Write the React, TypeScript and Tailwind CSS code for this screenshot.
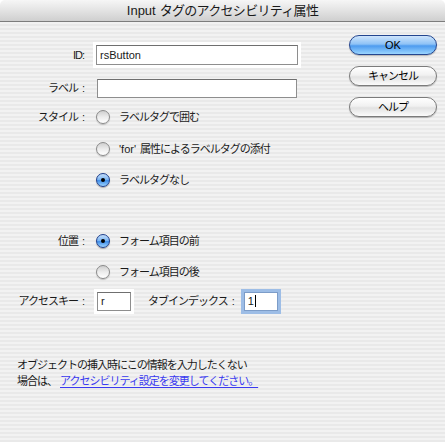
import React from 'react';

const pill =
  'w-[88px] h-[20px] rounded-full flex items-center justify-center text-[11px] text-black tracking-[-1px] shadow-[0_1px_1px_rgba(0,0,0,0.25)]';

const Radio: React.FC<{ checked?: boolean; children: React.ReactNode }> = ({ checked, children }) => (
  <div className="flex items-center h-[20px]">
    {checked ? (
      <span className="w-[14px] h-[14px] rounded-full border border-[#1f3f8c] bg-[linear-gradient(180deg,#c4defa_0%,#7fb7f3_45%,#3f8de8_55%,#9bd3ff_100%)] flex items-center justify-center shadow-[0_1px_1px_rgba(0,0,0,0.3)]">
        <span className="w-[4px] h-[4px] rounded-full bg-black" />
      </span>
    ) : (
      <span className="w-[14px] h-[14px] rounded-full border border-[#8a8a8a] bg-[linear-gradient(180deg,#cfcfcf_0%,#ececec_50%,#ffffff_100%)] shadow-[0_1px_1px_rgba(0,0,0,0.2)]" />
    )}
    <span className="ml-[9px] tracking-[-1px]">{children}</span>
  </div>
);

// right-aligned field label, colon set apart like the Japanese dialog does
const Label: React.FC<{ text: string; tight?: boolean }> = ({ text, tight }) => (
  <div className="w-[86px] shrink-0 text-right pr-[1px]">
    <span className="tracking-[-1px]">{text}</span>
    <span className={tight ? '' : 'ml-[4px]'}>:</span>
  </div>
);

export default function App() {
  return (
    <div
      className="w-[445px] h-[442px] overflow-hidden bg-white text-[11px] text-[#1a1a1a]"
      style={{ fontFamily: '"Liberation Sans", "Noto Sans CJK JP", sans-serif' }}
    >
      {/* Title bar */}
      <div className="h-[22px] rounded-t-[5px] border-b border-[#7d7d7d] bg-[linear-gradient(180deg,#f6f6f6_0%,#e3e3e3_50%,#cfcfcf_100%)] flex items-center justify-center text-[13px] text-[#1a1a1a]">
        <span>Input</span>
        <span className="ml-[4px] tracking-[-0.7px]">タグのアクセシビリティ属性</span>
      </div>

      {/* Body */}
      <div className="h-[420px] bg-[repeating-linear-gradient(180deg,#f2f2f2_0px,#f2f2f2_2px,#e9e9e9_2px,#e9e9e9_4px)] flex">
        <div className="w-[340px] pt-[23px] flex flex-col">
          <div className="flex items-center h-[20px]">
            <Label text="ID" tight />
            <div className="ml-[10px] w-[202px] h-[20px] bg-white border border-[#8e8e8e] border-t-[#6f6f6f] ring-[3px] ring-white flex items-center pl-[3px]">
              rsButton
            </div>
          </div>

          <div className="flex items-center h-[20px] mt-[13px]">
            <Label text="ラベル" />
            <div className="ml-[11px] w-[200px] h-[19px] bg-white border border-[#8e8e8e] border-t-[#6f6f6f]" />
          </div>

          <div className="flex items-center h-[20px] mt-[9px]">
            <Label text="スタイル" />
            <div className="ml-[10px]">
              <Radio>ラベルタグで囲む</Radio>
            </div>
          </div>
          <div className="ml-[96px] mt-[12px]">
            <Radio>
              <span className="tracking-normal mr-[4px]">'for'</span>属性によるラベルタグの添付
            </Radio>
          </div>
          <div className="ml-[96px] mt-[11px]">
            <Radio checked>ラベルタグなし</Radio>
          </div>

          <div className="flex items-center h-[20px] mt-[41px]">
            <Label text="位置" />
            <div className="ml-[10px]">
              <Radio checked>フォーム項目の前</Radio>
            </div>
          </div>
          <div className="ml-[96px] mt-[11px]">
            <Radio>フォーム項目の後</Radio>
          </div>

          <div className="flex items-center h-[20px] mt-[9px]">
            <Label text="アクセスキー" />
            <div className="ml-[11px] w-[34px] h-[19px] bg-white border border-[#8e8e8e] border-t-[#6f6f6f] ring-[3px] ring-white flex items-center pl-[3px]">
              r
            </div>
            <div className="ml-[17px]">
              <span className="tracking-[-1px]">タブインデックス</span>
              <span className="ml-[4px]">:</span>
            </div>
            <div className="ml-[9px] w-[34px] h-[19px] bg-white border border-[#7c9cc8] ring-[3px] ring-[#9dbde6] flex items-center pl-[3px]">
              1<span className="w-[1px] h-[12px] bg-black ml-[1px]" />
            </div>
          </div>

          <div className="mt-[46px] pl-[17px] leading-[16px] tracking-[-1px] whitespace-nowrap">
            <div>オブジェクトの挿入時にこの情報を入力したくない</div>
            <div>
              場合は、
              <span className="ml-[3px] text-[#3a3af0] underline underline-offset-2">アクセシビリティ設定を変更してください。</span>
            </div>
          </div>
        </div>

        {/* Buttons */}
        <div className="ml-[9px] pt-[13px] flex flex-col gap-[11px]">
          <div className={`${pill} border border-[#24468f] bg-[linear-gradient(180deg,#cfe5fc_0%,#8ec2f6_45%,#4e9bef_55%,#9ad5ff_100%)]`}>
            <span className="tracking-normal">OK</span>
          </div>
          <div className={`${pill} border border-[#7b7b7b] bg-[linear-gradient(180deg,#ffffff_0%,#f1f1f1_45%,#e2e2e2_55%,#fbfbfb_100%)]`}>
            キャンセル
          </div>
          <div className={`${pill} border border-[#7b7b7b] bg-[linear-gradient(180deg,#ffffff_0%,#f1f1f1_45%,#e2e2e2_55%,#fbfbfb_100%)]`}>
            ヘルプ
          </div>
        </div>
      </div>
    </div>
  );
}
